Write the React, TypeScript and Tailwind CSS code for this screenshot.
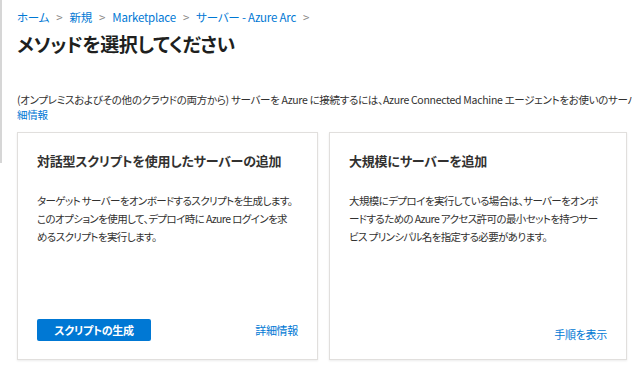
import React from 'react';

const crumbs = ['ホーム', '新規', 'Marketplace', 'サーバー - Azure Arc'];

function Card({ title, lines, footer }: { title: string; lines: string[]; footer: React.ReactNode }) {
  return (
    <div className="flex flex-col h-full border border-[#e1dfdd] shadow-[0_1px_2px_rgba(0,0,0,0.08)] bg-white px-[19px] pt-[18px] pb-[18px]">
      <h2 className="text-[13px] leading-[20px] font-semibold tracking-[-0.2px] text-[#323130] whitespace-nowrap">{title}</h2>
      <div className="mt-[21px] text-[10.5px] leading-[18px] tracking-[-0.6px] text-[#323130]">
        {lines.map((l) => (
          <div key={l} className="whitespace-pre">{l}</div>
        ))}
      </div>
      <div className="mt-auto h-[22px]">{footer}</div>
    </div>
  );
}

export default function App() {
  return (
    <div className="relative w-[632px] h-[365px] overflow-hidden bg-white text-[#323130] font-['Noto_Sans_CJK_JP','Noto_Sans',sans-serif] [font-feature-settings:'palt']">
      {/* left blade edge */}
      <div className="absolute left-0 top-0 w-[2px] h-[163px] bg-[#d6d6d6]" />

      {/* Breadcrumb */}
      <nav className="flex items-center gap-[7px] pl-[17px] pt-[9px] text-[11.5px] leading-[16px] tracking-[-0.2px]">
        {crumbs.map((c) => (
          <React.Fragment key={c}>
            <span className="text-[#0078d4]">{c}</span>
            <span className="text-[#8a8886]">&gt;</span>
          </React.Fragment>
        ))}
      </nav>

      {/* Title */}
      <h1 className="pl-[17px] mt-[6px] text-[19px] leading-[26px] font-semibold tracking-[-0.4px] text-[#201f1e]">
        メソッドを選択してください
      </h1>

      {/* Description */}
      <div className="pl-[17px] mt-[35px] text-[10.5px] leading-[15px] tracking-[-0.3px] whitespace-nowrap">
        <div>
          (オンプレミスおよびその他のクラウドの両方から) サーバーを Azure に接続するには、Azure Connected Machine エージェントをお使いのサーバーにインストールします。
          <span className="text-[#0078d4]">詳</span>
        </div>
        <div className="text-[#0078d4]">細情報</div>
      </div>

      {/* Options */}
      <div className="flex gap-[11px] pl-[17px] mt-[10px] h-[228px]">
        <div className="w-[301px] h-full">
          <Card
            title="対話型スクリプトを使用したサーバーの追加"
            lines={[
              'ターゲット サーバーをオンボードするスクリプトを生成します。',
              'このオプションを使用して、デプロイ時に Azure ログインを求',
              'めるスクリプトを実行します。',
            ]}
            footer={
              <div className="flex items-center justify-between h-full">
                <button className="h-[22px] w-[114px] rounded-[2px] bg-[#0078d4] text-white text-[11px] font-bold tracking-[-0.3px]">
                  スクリプトの生成
                </button>
                <span className="text-[11px] tracking-[-0.3px] text-[#0078d4]">詳細情報</span>
              </div>
            }
          />
        </div>
        <div className="w-[298px] h-full">
          <Card
            title="大規模にサーバーを追加"
            lines={[
              '大規模にデプロイを実行している場合は、サーバーをオンボ',
              'ードするための Azure アクセス許可の最小セットを持つサー',
              'ビス プリンシパル名を指定する必要があります。',
            ]}
            footer={
              <div className="flex items-end justify-end h-full">
                <span className="text-[11px] leading-[14px] tracking-[-0.3px] text-[#0078d4]">手順を表示</span>
              </div>
            }
          />
        </div>
      </div>
    </div>
  );
}
